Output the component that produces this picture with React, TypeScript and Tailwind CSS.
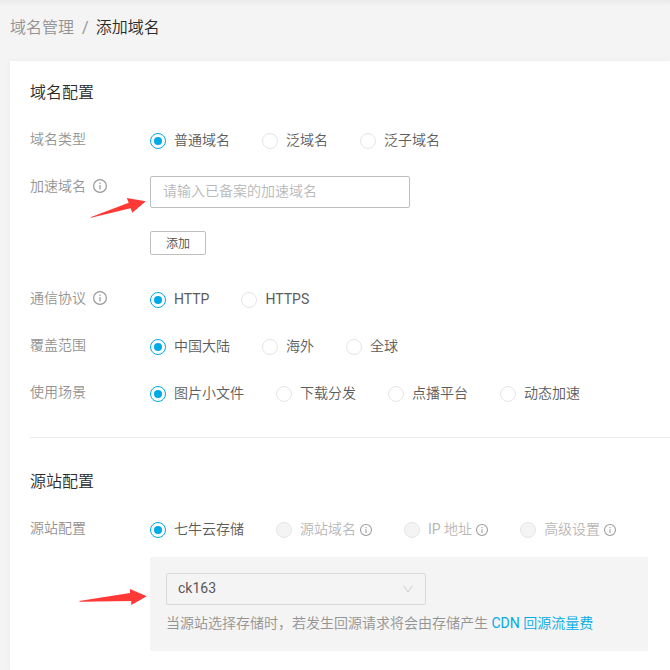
import { ReactNode } from "react";
import clsx from "clsx";

function InfoIcon({ className }: { className?: string }) {
  return (
    <svg viewBox="0 0 14 14" fill="none" className={clsx("shrink-0", className)}>
      <circle cx="7" cy="7" r="6.4" stroke="#999999" strokeWidth="1.2" />
      <path d="M7 6v4.4M7 3.5v1.4" stroke="#999999" strokeWidth="1.2" />
    </svg>
  );
}

type RadioOption = {
  label: string;
  disabled?: boolean;
  info?: boolean;
};

function RadioGroup({ options }: { options: RadioOption[] }) {
  return (
    <div className="flex h-8 items-center gap-8">
      {options.map(({ label, disabled, info }, i) => (
        <div key={label} className="flex items-center">
          <span
            className={clsx(
              "flex h-4 w-4 items-center justify-center rounded-full border",
              i === 0 ? "border-[#00aae7] bg-white" : "border-[#e5e5e5]",
              disabled && "bg-[#f4f4f4]"
            )}
          >
            {i === 0 && <span className="h-2 w-2 rounded-full bg-[#00aae7]" />}
          </span>
          <span
            className={clsx(
              "relative -top-px ml-2 whitespace-nowrap leading-5",
              disabled ? "text-[#b8b8b8]" : "text-[#5c5c5c]"
            )}
          >
            {label}
          </span>
          {info && <InfoIcon className="ml-1 h-3 w-3" />}
        </div>
      ))}
    </div>
  );
}

type RowProps = {
  label: string;
  info?: boolean;
  className?: string;
  labelClassName?: string;
  children: ReactNode;
};

function FormRow({ label, info, className, labelClassName = "h-7", children }: RowProps) {
  return (
    <div className={clsx("flex items-start", className)}>
      <div className={clsx("flex w-[120px] shrink-0 items-center text-[#939393]", labelClassName)}>
        {label}
        {info && <InfoIcon className="ml-[7px] h-3.5 w-3.5" />}
      </div>
      <div className="relative">{children}</div>
    </div>
  );
}

export default function App() {
  return (
    <div className="h-[670px] w-[670px] overflow-hidden bg-[#f4f4f4] font-['Roboto','Noto_Sans_CJK_SC_DemiLight','Noto_Sans_CJK_SC',sans-serif] text-sm text-[#666666]">
      <div className="h-[61px] bg-linear-to-b from-[#ebebeb] to-[#f4f4f4] to-10% pt-4 pl-[10px] text-base leading-6 text-[#2b2b2b]">
        <span className="text-[#939393]">域名管理</span>
        <span className="mx-2 text-[#939393]">/</span>
        <span className="-ml-px">添加域名</span>
      </div>

      <div className="ml-[10px] h-[609px] bg-white pt-5 pl-5 shadow-[0_0_6px_rgba(0,0,0,0.04)]">
        <h2 className="text-base leading-6 text-[#2b2b2b]">域名配置</h2>
        <FormRow label="域名类型" className="mt-5">
          <RadioGroup options={[{ label: "普通域名" }, { label: "泛域名" }, { label: "泛子域名" }]} />
        </FormRow>
        <FormRow label="加速域名" info className="mt-[19px]" labelClassName="h-5">
          <input
            className="block h-8 w-[260px] rounded-[2px] border border-[#bfbfbf] bg-white px-3 pb-0.5 text-sm outline-none placeholder:text-[#b8b8b8]"
            placeholder="请输入已备案的加速域名"
          />
          <button className="mt-[23px] flex h-6 w-14 items-center justify-center rounded-[2px] border border-[#bfbfbf] pt-0.5 text-xs text-[#4d4d4d]">
            添加
          </button>
          <svg className="absolute top-[17px] -left-[60px] h-[26px] w-[60px]" viewBox="90 193 60 26">
            <path
              d="M90.5 217.2 128.7 202.7 126.8 198 145.8 201.3 132.3 212.8 130.6 208.3 91 217.8z"
              fill="#ff3a36"
            />
          </svg>
        </FormRow>
        <FormRow label="通信协议" info className="mt-[29px]">
          <RadioGroup options={[{ label: "HTTP" }, { label: "HTTPS" }]} />
        </FormRow>
        <FormRow label="覆盖范围" className="mt-[15px]">
          <RadioGroup options={[{ label: "中国大陆" }, { label: "海外" }, { label: "全球" }]} />
        </FormRow>
        <FormRow label="使用场景" className="mt-[15px]">
          <RadioGroup
            options={[
              { label: "图片小文件" },
              { label: "下载分发" },
              { label: "点播平台" },
              { label: "动态加速" },
            ]}
          />
        </FormRow>

        <div className="mt-[27px] border-t border-[#e9e9e9]" />

        <h2 className="mt-8 text-base leading-6 text-[#2b2b2b]">源站配置</h2>
        <FormRow label="源站配置" className="mt-5">
          <RadioGroup
            options={[
              { label: "七牛云存储" },
              { label: "源站域名", disabled: true, info: true },
              { label: "IP 地址", disabled: true, info: true },
              { label: "高级设置", disabled: true, info: true },
            ]}
          />
          <div className="mt-[11px] h-[94px] w-[498px] bg-[#f4f4f4] p-4">
            <div className="flex h-8 w-[260px] items-center justify-between rounded-[2px] border border-[#d9d9d9] pr-3 pl-[11px] text-[#595959]">
              <span className="relative -top-px">ck163</span>
              <svg viewBox="0 0 10 8" fill="none" className="h-2 w-2.5">
                <path d="M.5.5 5 7 9.5.5" stroke="#cccccc" />
              </svg>
            </div>
            <p className="mt-2 leading-5 whitespace-nowrap text-[#939393]">
              当源站选择存储时，若发生回源请求将会由存储产生{" "}
              <a className="text-[#00aae7]">CDN 回源流量费</a>
            </p>
          </div>
          <svg className="absolute top-[70px] -left-[72px] h-[26px] w-[72px]" viewBox="78 584 72 26">
            <path
              d="M79 601 130 593 130 589 146.8 596.3 131.3 605 131.2 601 80 601.8z"
              fill="#ff3a36"
            />
          </svg>
        </FormRow>
      </div>
    </div>
  );
}
